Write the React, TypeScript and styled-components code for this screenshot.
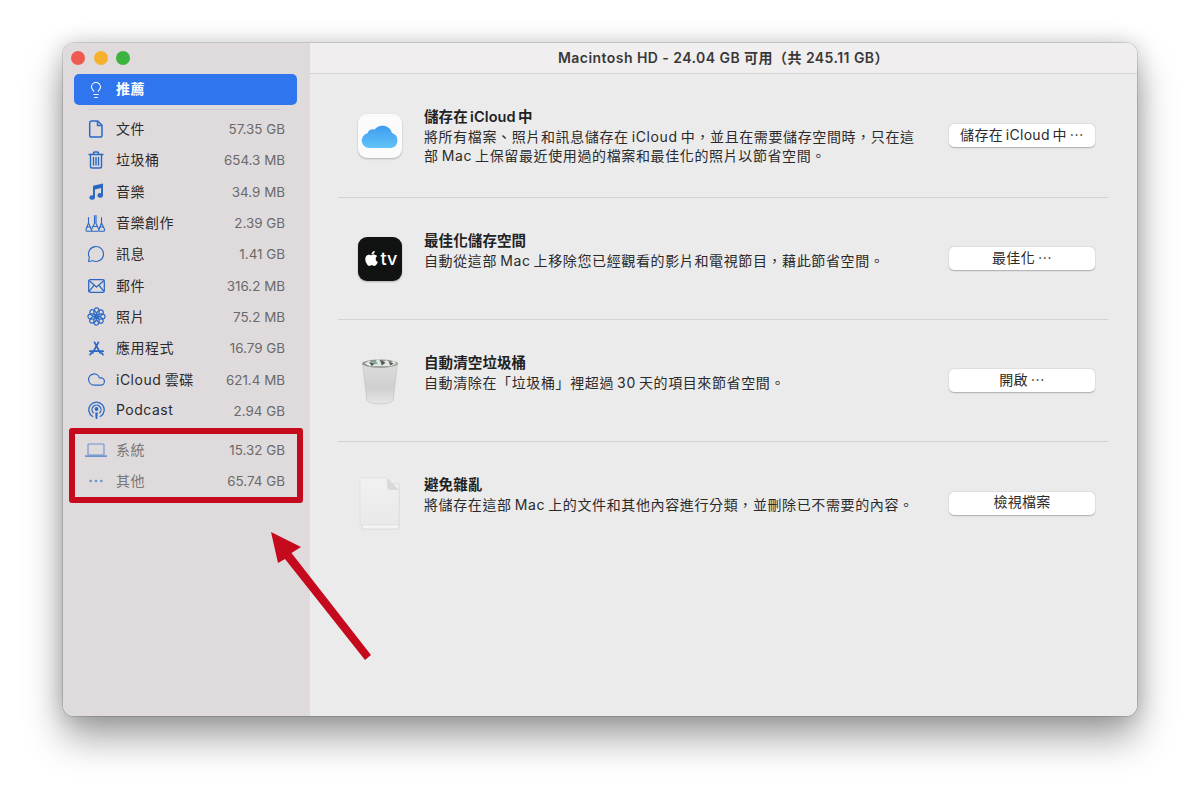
import React from "react";
import styled, { createGlobalStyle } from "styled-components";
import { Lightbulb, MessageCircle, Cloud, Ellipsis } from "lucide-react";
import { FaApple } from "react-icons/fa";

const Global = createGlobalStyle`
  html, body { margin: 0; padding: 0; background: #fff; }
  body { font-family: "Inter", "Noto Sans CJK TC", sans-serif; -webkit-font-smoothing: antialiased; }
`;

const Page = styled.div`
  position: relative;
  width: 1200px;
  height: 799px;
  overflow: hidden;
  background: #fff;
  padding: 43px 63px 0;
  box-sizing: border-box;
`;

const Window = styled.div`
  display: flex;
  width: 1074px;
  height: 673px;
  border-radius: 11px;
  overflow: hidden;
  box-shadow: 0 0 0 1px rgba(0, 0, 0, 0.12), 0 22px 38px rgba(0, 0, 0, 0.36), 0 0 22px rgba(0, 0, 0, 0.18);
`;

const Sidebar = styled.aside`
  width: 247px;
  flex: none;
  background: #dfdbdc;
  display: flex;
  flex-direction: column;
  padding: 0 13px 0 11px;
  box-sizing: border-box;
`;

const Lights = styled.div`
  height: 31px;
  display: flex;
  align-items: center;
  gap: 8.5px;
  margin-left: -3px;
  padding-bottom: 1px;
  box-sizing: border-box;
`;

const Light = styled.span<{ $c: string }>`
  width: 14px;
  height: 14px;
  border-radius: 50%;
  background: ${(p) => p.$c};
`;

const Row = styled.div<{ $active?: boolean; $dim?: boolean }>`
  display: flex;
  align-items: center;
  height: ${(p) => (p.$active ? 31 : 31.3)}px;
  flex: none;
  padding: 0 12px 0 11px;
  border-radius: 5px;
  font-size: 14px;
  letter-spacing: 0.5px;
  color: ${(p) => (p.$active ? "#fff" : p.$dim ? "#77767a" : "#2b2a2b")};
  background: ${(p) => (p.$active ? "#2f76ee" : "transparent")};
  font-weight: ${(p) => (p.$active ? 600 : 400)};
`;

const IconBox = styled.span<{ $active?: boolean; $dim?: boolean }>`
  width: 22px;
  height: 22px;
  margin-right: 9px;
  display: flex;
  align-items: center;
  justify-content: center;
  flex: none;
  color: ${(p) => (p.$active ? "#fff" : p.$dim ? "#6c93cf" : "#2b68c4")};
`;

const Label = styled.span<{ $active?: boolean }>`
  flex: 1;
  white-space: nowrap;
  word-spacing: -1px;
  padding-bottom: ${(p) => (p.$active ? 3 : 2)}px;
`;

const Size = styled.span`
  font-size: 13.4px;
  letter-spacing: 0;
  color: #6a696b;
  white-space: nowrap;
`;

const SideDivider = styled.div`
  height: 1px;
  margin: 3.5px 16px 4px 15px;
  background: #cfcccd;
  flex: none;
`;

const Spacer = styled.div`
  height: 8px;
  flex: none;
`;

const Main = styled.main`
  flex: 1;
  background: #ecebec;
  display: flex;
  flex-direction: column;
  min-width: 0;
`;

const TitleBar = styled.header`
  height: 31px;
  box-sizing: border-box;
  padding-bottom: 2px;
  flex: none;
  background: #f1eeef;
  border-bottom: 1px solid #d5d3d4;
  display: flex;
  align-items: center;
  justify-content: center;
  font-size: 14px;
  font-weight: 600;
  letter-spacing: 0.45px;
  color: #3a393a;
`;

const List = styled.div`
  padding: 0 29px 0 28px;
  display: flex;
  flex-direction: column;
`;

const Item = styled.section`
  height: 122px;
  box-sizing: border-box;
  display: flex;
  align-items: center;
  padding: 0 13px 0 20px;
  &:first-child { height: 124px; }
  &:not(:last-child) { border-bottom: 1px solid #d4d3d4; }
`;

const Tile = styled.div<{ $bg: string }>`
  width: 44px;
  height: 44px;
  flex: none;
  margin-right: 22px;
  border-radius: 9px;
  background: ${(p) => p.$bg};
  box-shadow: 0 1px 2px rgba(0, 0, 0, 0.25);
  display: flex;
  align-items: center;
  justify-content: center;
  gap: 1px;
  color: #fff;
`;

const BareIcon = styled.div`
  width: 44px;
  flex: none;
  margin-right: 22px;
  display: flex;
  justify-content: center;
`;

const TvText = styled.span`
  font-size: 18px;
  font-weight: 500;
  line-height: 1;
  font-family: "Inter", sans-serif;
`;

const TextBlock = styled.div`
  flex: 1;
  min-height: 58px;
  font-size: 14px;
  letter-spacing: 0.62px;
  word-spacing: -1.5px;
  color: #2b2a2b;
`;

const Title = styled.div`
  font-weight: 600;
  font-size: 14.5px;
  line-height: 22px;
  letter-spacing: 0.1px;
  color: #222;
`;

const Desc = styled.div`
  line-height: 18.5px;
  white-space: nowrap;
`;

const Button = styled.button`
  width: 146px;
  height: 23px;
  flex: none;
  border: 0;
  padding: 0 0 2px;
  border-radius: 5px;
  background: #fff;
  box-shadow: 0 0.5px 1.5px rgba(0, 0, 0, 0.28);
  font-family: inherit;
  font-size: 14px;
  letter-spacing: 0.3px;
  word-spacing: -1.5px;
  color: #2b2a2b;
  line-height: 1;
`;

const Highlight = styled.div`
  position: absolute;
  left: 69px;
  top: 428px;
  width: 234px;
  height: 75px;
  box-sizing: border-box;
  border: 6px solid #c40a1c;
  border-radius: 3px;
`;

const ArrowSvg = styled.svg`
  position: absolute;
  left: 260px;
  top: 520px;
`;

const DocIcon = () => (
  <svg width="17" height="18" viewBox="0 0 17 18" fill="none" stroke="currentColor" strokeWidth="1.5" strokeLinejoin="round">
    <path d="M3.500 1h6.300L14 5.200V15.200a1.800 1.800 0 0 1-1.800 1.800H3.500a1.800 1.800 0 0 1-1.800-1.800V2.800A1.800 1.800 0 0 1 3.500 1Z" />
    <path d="M9.500 1.200V5.400h4.300" />
  </svg>
);

const BinIcon = () => (
  <svg width="16" height="18" viewBox="0 0 16 18" fill="none" stroke="currentColor" strokeWidth="1.4" strokeLinecap="round" strokeLinejoin="round">
    <path d="M1 3.500h14M5.500 3.200V2a1 1 0 0 1 1-1h3a1 1 0 0 1 1 1v1.200" />
    <path d="M2.500 3.500v11.700A1.800 1.800 0 0 0 4.300 17h7.400a1.800 1.800 0 0 0 1.800-1.800V3.500" />
    <path d="M5.500 6.500v7.500M8 6.500v7.500M10.500 6.500v7.500" />
  </svg>
);

const NoteIcon = () => (
  <svg width="16" height="17" viewBox="0 0 16 17" fill="currentColor">
    <path d="M5 2.800 15 .5v12h-.01a2.800 2.300 0 1 1-1.900-2.200V5L7 6.400v8.100a2.800 2.300 0 1 1-2-2.200Z" />
  </svg>
);

const LabIcon = () => (
  <svg width="22" height="18" viewBox="0 0 22 18" fill="none" stroke="currentColor" strokeWidth="1.1" strokeLinejoin="round" strokeLinecap="round">
    <path d="M3.500 3.500V9L1 15.500a1.200 1.200 0 0 0 1.100 1.700h4.200" />
    <path d="M3.500 9 6 15" />
    <path d="M9.500 1.500v8l-3 6a1.200 1.200 0 0 0 1.100 1.700h5.200a1.200 1.200 0 0 0 1.100-1.700l-2.900-6v-8" />
    <path d="M16.500 3.500V9l-2.200 6M16.500 9 19.600 15.500a1.200 1.200 0 0 1-1.100 1.700h-4" />
    <path d="M8 12.500h4.500M2 13h3.500M15 13h3.500" />
  </svg>
);

const EnvelopeIcon = () => (
  <svg width="17" height="14" viewBox="0 0 17 14" fill="none" stroke="currentColor" strokeWidth="1.3" strokeLinejoin="round">
    <rect x="0.700" y="0.700" width="15.600" height="12.600" rx="1.500" />
    <path d="M1 1.500 8.500 8 16 1.500M1 12.500l5.200-6.300M16 12.500l-5.200-6.300" />
  </svg>
);

const FlowerIcon = () => (
  <svg width="19" height="19" viewBox="0 0 20 20" fill="none" stroke="currentColor" strokeWidth="1.3">
    {[0, 45, 90, 135, 180, 225, 270, 315].map((a) => (
      <ellipse key={a} cx="10" cy="5" rx="2.800" ry="4" transform={`rotate(${a} 10 10)`} />
    ))}
  </svg>
);

const AppIcon = () => (
  <svg width="15" height="15" viewBox="0 0 17 16" fill="none" stroke="currentColor" strokeWidth="2" strokeLinecap="round">
    <path d="M10.600 1 4.200 13M6.300 1l6.300 12M1 11h15M1.200 15l1.400-2M15.800 15l-1.400-2" />
  </svg>
);

const PodcastIcon = () => (
  <svg width="17" height="19" viewBox="0 0 17 19" fill="none" stroke="currentColor" strokeWidth="1.3" strokeLinecap="round">
    <path d="M4.700 15.500a7.700 7.700 0 1 1 7.600 0" />
    <path d="M5.200 11.700a4.500 4.500 0 1 1 6.600 0" />
    <circle cx="8.500" cy="8" r="1.900" fill="currentColor" stroke="none" />
    <path d="M7.200 11.500h2.600L9.300 18H7.700Z" fill="currentColor" stroke="none" />
  </svg>
);

const LaptopIcon = () => (
  <svg width="22" height="15" viewBox="0 0 22 15" fill="none" stroke="currentColor" strokeWidth="1.1">
    <rect x="3" y="1" width="16" height="11" rx="0.800" />
    <path d="M0.500 13.200h21" strokeWidth="1.700" strokeLinecap="round" />
  </svg>
);

const FolderTrash = () => (
  <svg width="48" height="52" viewBox="0 0 48 52" style={{ display: "block" }}>
    <defs>
      <linearGradient id="bin" x1="0" y1="0" x2="0" y2="1">
        <stop offset="0" stopColor="#dcdcdc" />
        <stop offset="0.6" stopColor="#cfcfcf" />
        <stop offset="1" stopColor="#e6e6e6" />
      </linearGradient>
    </defs>
    <path d="M5 7 9.500 46c.3 3 6.500 5 14.500 5s14.200-2 14.500-5L43 7Z" fill="url(#bin)" stroke="#c4c4c4" strokeWidth="0.800" />
    <ellipse cx="24" cy="7" rx="19.500" ry="4.500" fill="#8e918f" />
    <path d="M7 7l5-3 5 2 5-4 4 4 5-3 4 3 4-2 3 3-6 3H13Z" fill="#e3e6e2" />
    <path d="M12 5l6 2-3 3ZM24 3l6 3-4 3ZM34 5l5 2-4 2Z" fill="#4d5a50" />
    <path d="M18 3l4 4-5 1Z" fill="#7cae8c" />
  </svg>
);

const PagesIcon = () => (
  <svg width="44" height="54" viewBox="0 0 44 54" style={{ display: "block" }}>
    <defs>
      <linearGradient id="pg" x1="0" y1="0" x2="0" y2="1">
        <stop offset="0" stopColor="#f1f1f1" />
        <stop offset="1" stopColor="#e9e9e9" />
      </linearGradient>
    </defs>
    <path d="M4 8h37v45H4Z" fill="#f4f4f4" stroke="#cfcfcf" strokeWidth="0.700" />
    <path d="M2 2h27L41 14v35H2Z" fill="url(#pg)" stroke="#dcdcdc" strokeWidth="0.700" />
    <path d="M29 2 41 14H32a3 3 0 0 1-3-3Z" fill="#d9d9d9" />
  </svg>
);

const CloudTile = () => (
  <svg width="38" height="24" viewBox="0 0 38 24">
    <defs>
      <linearGradient id="cl" x1="0" y1="0" x2="0" y2="1">
        <stop offset="0" stopColor="#3e9cf0" />
        <stop offset="1" stopColor="#62c3f8" />
      </linearGradient>
    </defs>
    <path d="M8 24a7.500 7.500 0 0 1-1.500-14.800A6 6 0 0 1 13.500 5.500 10 10 0 0 1 31 9a7.800 7.800 0 0 1-.5 15Z" fill="url(#cl)" />
  </svg>
);

type Entry = { icon: React.ReactNode; name: string; size: string };

const entries: Entry[] = [
  { icon: <DocIcon />, name: "文件", size: "57.35 GB" },
  { icon: <BinIcon />, name: "垃圾桶", size: "654.3 MB" },
  { icon: <NoteIcon />, name: "音樂", size: "34.9 MB" },
  { icon: <LabIcon />, name: "音樂創作", size: "2.39 GB" },
  { icon: <MessageCircle size={18} strokeWidth={1.5} />, name: "訊息", size: "1.41 GB" },
  { icon: <EnvelopeIcon />, name: "郵件", size: "316.2 MB" },
  { icon: <FlowerIcon />, name: "照片", size: "75.2 MB" },
  { icon: <AppIcon />, name: "應用程式", size: "16.79 GB" },
  { icon: <Cloud size={19} strokeWidth={1.5} />, name: "iCloud 雲碟", size: "621.4 MB" },
  { icon: <PodcastIcon />, name: "Podcast", size: "2.94 GB" },
];
const dimEntries: Entry[] = [
  { icon: <LaptopIcon />, name: "系統", size: "15.32 GB" },
  { icon: <Ellipsis size={18} strokeWidth={1.6} />, name: "其他", size: "65.74 GB" },
];

export default function App() {
  return (
    <Page>
      <Global />
      <Window>
        <Sidebar>
          <Lights>
            <Light $c="#ee5a52" />
            <Light $c="#f5b02e" />
            <Light $c="#3cb33f" />
          </Lights>
          <Row $active>
            <IconBox $active><Lightbulb size={18} strokeWidth={1.4} /></IconBox>
            <Label $active>推薦</Label>
          </Row>
          <SideDivider />
          {entries.map((e) => (
            <Row key={e.name}>
              <IconBox>{e.icon}</IconBox>
              <Label>{e.name}</Label>
              <Size>{e.size}</Size>
            </Row>
          ))}
          <Spacer />
          {dimEntries.map((e) => (
            <Row key={e.name} $dim>
              <IconBox $dim>{e.icon}</IconBox>
              <Label>{e.name}</Label>
              <Size>{e.size}</Size>
            </Row>
          ))}
        </Sidebar>
        <Main>
          <TitleBar>Macintosh HD - 24.04 GB 可用（共 245.11 GB）</TitleBar>
          <List>
            <Item>
              <Tile $bg="#fbfbfb"><CloudTile /></Tile>
              <TextBlock>
                <Title>儲存在 iCloud 中</Title>
                <Desc>將所有檔案、照片和訊息儲存在 iCloud 中，並且在需要儲存空間時，只在這</Desc>
                <Desc>部 Mac 上保留最近使用過的檔案和最佳化的照片以節省空間。</Desc>
              </TextBlock>
              <Button>儲存在 iCloud 中 ⋯</Button>
            </Item>
            <Item>
              <Tile $bg="#101312"><FaApple size={17} /><TvText>tv</TvText></Tile>
              <TextBlock>
                <Title>最佳化儲存空間</Title>
                <Desc>自動從這部 Mac 上移除您已經觀看的影片和電視節目，藉此節省空間。</Desc>
              </TextBlock>
              <Button>最佳化 ⋯</Button>
            </Item>
            <Item>
              <BareIcon><FolderTrash /></BareIcon>
              <TextBlock>
                <Title>自動清空垃圾桶</Title>
                <Desc>自動清除在「垃圾桶」裡超過 30 天的項目來節省空間。</Desc>
              </TextBlock>
              <Button>開啟 ⋯</Button>
            </Item>
            <Item>
              <BareIcon><PagesIcon /></BareIcon>
              <TextBlock>
                <Title>避免雜亂</Title>
                <Desc>將儲存在這部 Mac 上的文件和其他內容進行分類，並刪除已不需要的內容。</Desc>
              </TextBlock>
              <Button>檢視檔案</Button>
            </Item>
          </List>
        </Main>
      </Window>
      <Highlight />
      <ArrowSvg width="115" height="145" viewBox="260 520 115 145">
        <path d="M271 532 301 547 291.500 553 371 655 365 660 285 559 278 563Z" fill="#c40a1c" />
      </ArrowSvg>
    </Page>
  );
}
